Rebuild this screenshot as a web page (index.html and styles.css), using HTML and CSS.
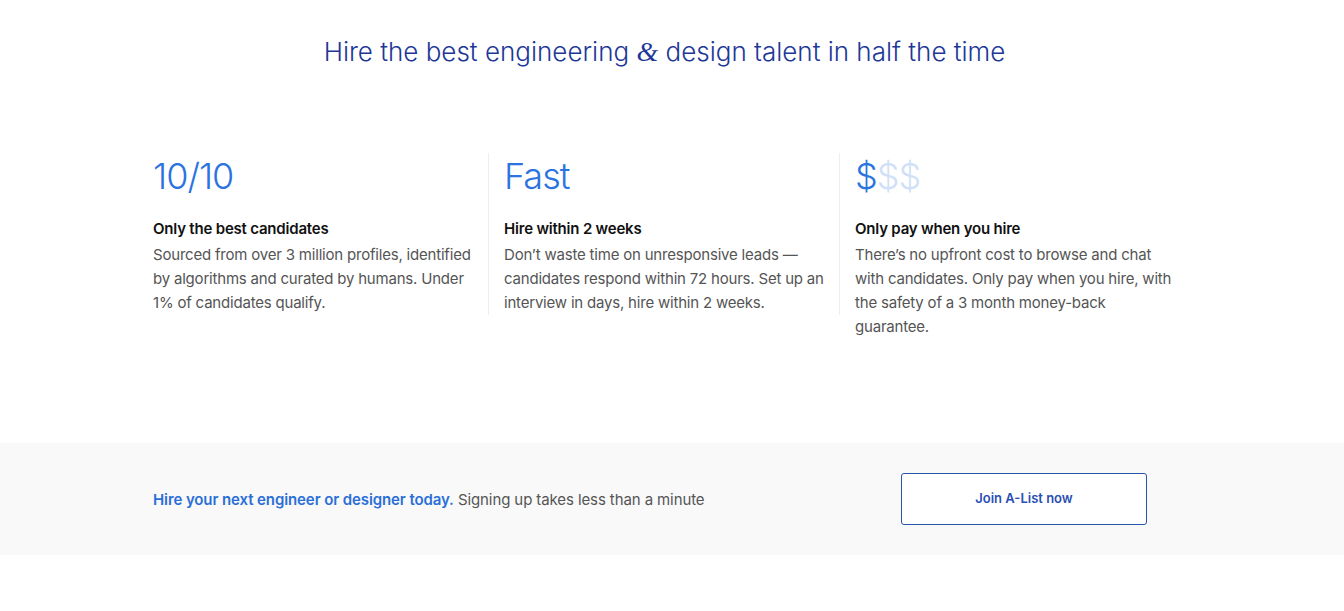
FILE: index.html
```html
<!DOCTYPE html>
<html lang="en">
<head>
    <meta charset="UTF-8">
    <meta name="viewport" content="width=device-width, initial-scale=1.0">
    <title>A-List – Hire engineers and designers</title>
    <link rel="stylesheet" href="styles.css">
</head>
<body>

<section class="intro">
    <h1>Hire the best engineering <span class="amp">&amp;</span> design talent in half the time</h1>

    <div class="features">
        <div class="feature">
            <div class="stat">10/10</div>
            <h3>Only the best candidates</h3>
            <p>Sourced from over 3 million profiles, identified by algorithms and curated by humans. Under 1% of candidates qualify.</p>
        </div>
        <div class="feature">
            <div class="stat">Fast</div>
            <h3>Hire within 2 weeks</h3>
            <p>Don’t waste time on unresponsive leads — candidates respond within 72 hours. Set up an interview in days, hire within 2 weeks.</p>
        </div>
        <div class="feature">
            <div class="stat">$<span class="faded">$$</span></div>
            <h3>Only pay when you hire</h3>
            <p>There’s no upfront cost to browse and chat with candidates. Only pay when you hire, with the safety of a 3 month money-back guarantee.</p>
        </div>
    </div>
</section>

<section class="signup">
    <div class="signup-inner">
        <p><strong>Hire your next engineer or designer today.</strong> Signing up takes less than a minute</p>
        <a class="button" href="#">Join A-List now</a>
    </div>
</section>

</body>
</html>
```

FILE: styles.css
```css
body {
    font-family: Inter, "Open Sans", sans-serif;
    background-color: #fff;
    color: #555;
    margin: 0;
}
.intro {
    padding: 35px 15px 104px 0;
}
h1 {
    margin: 0 0 84px;
    text-align: center;
    font-size: 26px;
    font-weight: 300;
    line-height: 34px;
    color: #1d3797;
}
.amp {
    font-family: "Liberation Serif", serif;
    font-style: italic;
    font-size: 28px;
    line-height: 1;
}
.features {
    display: flex;
    align-items: flex-start;
    width: 1053px;
    margin: 0 auto;
}
.feature {
    flex: 1;
    padding: 0 15px;
    border-right: 1px solid #eee;
}
.feature:last-child {
    border-right-color: transparent;
}
.stat {
    font-size: 36px;
    font-weight: 300;
    line-height: 44px;
    letter-spacing: -1px;
    color: #2b73de;
    padding-top: 1px;
    margin-bottom: 19px;
}
.faded {
    color: #cfe0f7;
}
.feature h3 {
    margin: 0 0 2px;
    font-size: 15px;
    font-weight: 600;
    line-height: 24px;
    letter-spacing: -0.2px;
    color: #111;
}
.feature p {
    margin: 0;
    font-size: 15px;
    line-height: 24px;
    letter-spacing: -0.2px;
}
.signup {
    background-color: #f9f9f9;
    padding-right: 15px;
}
.signup-inner {
    display: flex;
    align-items: center;
    justify-content: space-between;
    width: 994px;
    margin: 0 auto;
    padding: 30px 44px 30px 15px;
}
.signup p {
    margin: 0;
    font-size: 15px;
    letter-spacing: -0.1px;
}
.signup strong {
    font-weight: 600;
    color: #2a6fd8;
}
.button {
    display: block;
    width: 244px;
    padding: 16px 0 17px;
    border: 1px solid #2457a8;
    border-radius: 3px;
    background: #fff;
    text-align: center;
    font-size: 13px;
    font-weight: 600;
    line-height: 17px;
    color: #2a4fb3;
    text-decoration: none;
}
```
